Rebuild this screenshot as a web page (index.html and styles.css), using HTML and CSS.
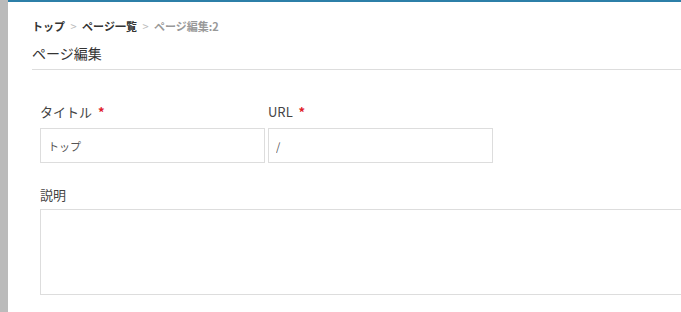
FILE: index.html
```html
<!DOCTYPE html>
<html lang="ja">
<head>
    <meta charset="UTF-8">
    <meta name="viewport" content="width=device-width, initial-scale=1.0">
    <title>ページ編集</title>
    <link rel="stylesheet" href="styles.css">
</head>
<body>
    <div class="layout">
        <div class="sidebar"></div>
        <div class="main">
            <div class="breadcrumb">
                <a href="#">トップ</a>
                <span class="sep">&gt;</span>
                <a href="#">ページ一覧</a>
                <span class="sep">&gt;</span>
                <span class="current">ページ編集:2</span>
            </div>
            <h1 class="page-title">ページ編集</h1>
            <form class="form">
                <div class="row">
                    <div class="field">
                        <label>タイトル <span class="req">*</span></label>
                        <input type="text" class="input" value="トップ">
                    </div>
                    <div class="field">
                        <label>URL <span class="req">*</span></label>
                        <input type="text" class="input" value="/">
                    </div>
                </div>
                <div class="field wide">
                    <label>説明</label>
                    <textarea class="textarea"></textarea>
                </div>
            </form>
        </div>
    </div>
</body>
</html>
```

FILE: styles.css
```css
body {
    margin: 0;
    font-family: "Noto Sans CJK JP", "Noto Sans", sans-serif;
    background: #fff;
    color: #333;
    overflow: hidden;
}
.layout {
    display: flex;
    height: 100vh;
}
.sidebar {
    width: 8px;
    flex-shrink: 0;
    background: #bbb;
}
.main {
    flex: 1;
    min-width: 0;
    overflow: hidden;
    border-top: 2px solid #2c7fa8;
    padding-left: 24px;
}
.breadcrumb {
    margin-top: 16px;
    font-size: 11px;
    font-weight: bold;
    line-height: 16px;
}
.breadcrumb a {
    color: #333;
    text-decoration: none;
}
.breadcrumb .sep {
    color: #bbb;
    font-weight: normal;
    margin: 0 3px;
}
.breadcrumb .current {
    color: #999;
}
.page-title {
    margin: 9px 0 0;
    padding-bottom: 6px;
    font-size: 14px;
    font-weight: normal;
    line-height: 20px;
    border-bottom: 1px solid #ddd;
}
.form {
    padding: 33px 0 0 8px;
}
.row {
    display: flex;
    gap: 3px;
}
.field label {
    display: block;
    font-size: 13px;
    line-height: 18px;
    color: #444;
    margin-bottom: 7px;
}
.req {
    color: #e0202a;
    font-weight: bold;
    margin-left: 3px;
}
.input {
    box-sizing: border-box;
    width: 225px;
    height: 35px;
    border: 1px solid #ddd;
    padding: 0 7px;
    font-family: inherit;
    font-size: 11px;
    color: #555;
    outline: none;
}
.wide {
    margin-top: 23px;
}
.wide label {
    margin-bottom: 5px;
}
.textarea {
    box-sizing: border-box;
    display: block;
    width: calc(100% + 20px);
    height: 86px;
    border: 1px solid #ddd;
    resize: none;
    outline: none;
}
```
